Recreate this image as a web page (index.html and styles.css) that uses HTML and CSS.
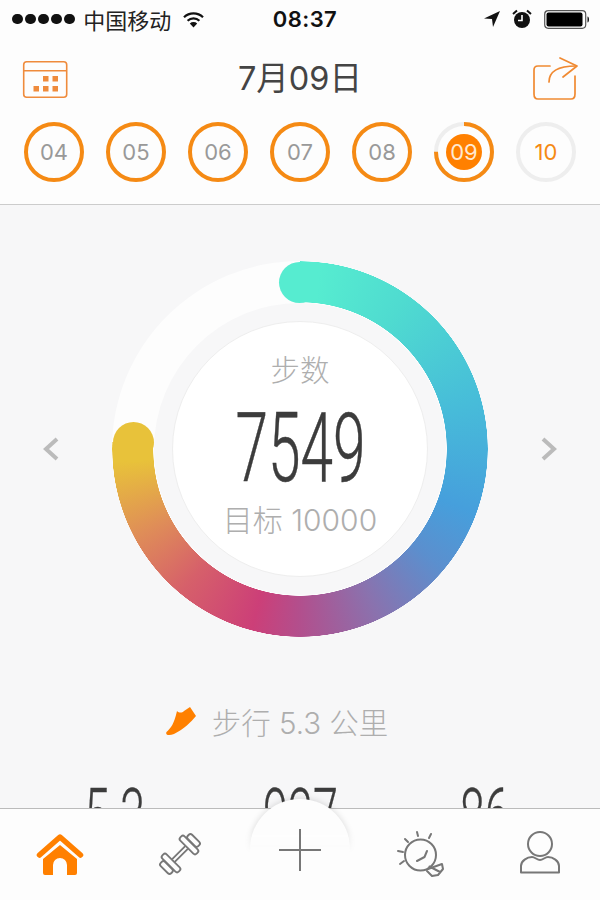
FILE: index.html
```html
<!DOCTYPE html>
<html lang="zh">
<head>
<meta charset="utf-8">
<title>步数</title>
<link rel="stylesheet" href="styles.css">
</head>
<body>
<div class="app">
  <header class="top">
    <div class="status">
      <div class="status-left">
        <div class="dots"><i></i><i></i><i></i><i></i><i></i></div>
        <span class="carrier">中国移动</span>
        <svg class="wifi" width="23" height="17" viewBox="0 0 23 17"><path d="M11.5 16.5 L7.8 12.4 A5.4 5.4 0 0 1 15.2 12.4 Z" fill="#111"/><path d="M5.6 9.8 A8.6 8.6 0 0 1 17.4 9.8" fill="none" stroke="#111" stroke-width="2.2"/><path d="M2 6.2 A13.6 13.6 0 0 1 21 6.2" fill="none" stroke="#111" stroke-width="2.2"/></svg>
      </div>
      <span class="time">08:37</span>
      <div class="status-right">
        <svg width="16" height="16" viewBox="0 0 16 16"><path d="M0 7.5 L16 0 L9 16 L8 8 Z" fill="#111"/></svg>
        <svg width="20" height="20" viewBox="0 0 20 20"><circle cx="10" cy="11" r="8" fill="#111"/><path d="M10 6 V11.5 H6" fill="none" stroke="#fff" stroke-width="1.6"/><path d="M1 5 L5 1.5 M19 5 L15 1.5" stroke="#111" stroke-width="2"/></svg>
        <svg width="46" height="19" viewBox="0 0 46 19"><rect x=".7" y=".7" width="41" height="17.6" rx="3.5" fill="none" stroke="#555" stroke-width="1.2"/><rect x="2.5" y="2.5" width="36" height="14" rx="2" fill="#000"/><path d="M43.5 6.5 C45.5 6.5 45.5 12.5 43.5 12.5 Z" fill="#111"/></svg>
      </div>
    </div>
    <div class="nav">
      <svg width="46" height="39" viewBox="0 0 46 39"><rect x="1.7" y="1.7" width="43" height="35.6" rx="3" fill="none" stroke="#ef8b3c" stroke-width="1.6"/><path d="M2 10.8 H44" stroke="#ef8b3c" stroke-width="1.6"/><g fill="#ef8b3c"><rect x="21" y="16" width="5.5" height="5.5"/><rect x="30.500" y="16" width="5.500" height="5.500"/><rect x="11.500" y="26" width="5.500" height="5.500"/><rect x="21" y="26" width="5.500" height="5.500"/><rect x="30.500" y="26" width="5.500" height="5.500"/></g></svg>
      <h1 class="date">7月09日</h1>
      <svg width="46" height="46" viewBox="0 0 46 46"><g fill="none" stroke="#f08a32" stroke-width="1.7" stroke-linecap="round" stroke-linejoin="round"><path d="M18 10 H6 Q2 10 2 14 V38 Q2 43 6 43 H39 Q43 43 43 38 V20"/><path d="M17 26 C17 16 26 10 44 10"/><path d="M28 2 L45 10 L31 21"/></g></svg>
    </div>
    <div class="days">
      <div class="day done">04</div>
      <div class="day done">05</div>
      <div class="day done">06</div>
      <div class="day done">07</div>
      <div class="day done">08</div>
      <div class="day today">
        <svg class="today-arc" width="60" height="60" viewBox="0 0 60 60"><circle cx="30" cy="30" r="28" fill="none" stroke="#eeeeee" stroke-width="4"/><circle cx="30" cy="30" r="28" fill="none" stroke="#f58a14" stroke-width="4" stroke-dasharray="132 176" transform="rotate(-90 30 30)"/></svg>
        <span class="today-disc">09</span>
      </div>
      <div class="day future">10</div>
    </div>
  </header>

  <main class="main">
    <section class="ring-row">
      <svg width="18" height="26" viewBox="0 0 18 26"><path d="M15 3 L4 13 L15 23" fill="none" stroke="#bbbbbb" stroke-width="4"/></svg>
      <div class="track">
        <div class="gradient"></div>
        <i class="cap cap-start"></i>
        <i class="cap cap-end"></i>
        <div class="hub">
          <div class="disc">
            <span class="label">步数</span>
            <span class="steps">7549</span>
            <span class="goal">目标 10000</span>
          </div>
        </div>
      </div>
      <svg width="18" height="26" viewBox="0 0 18 26"><path d="M3 3 L14 13 L3 23" fill="none" stroke="#bbbbbb" stroke-width="4"/></svg>
    </section>
    <div class="walk">
      <svg width="30" height="30" viewBox="0 0 30 30"><path d="M0.500 26 C5 22 8 18 11 5 C13 7 16 7 18 5 L24 1 L30 10 C25 16 18 23 8 28 C3 30 -1 29 0.500 26 Z" fill="#ff8000"/></svg>
      <span>步行 5.3 公里</span>
    </div>
    <div class="stats">
      <span class="stat">5.3</span>
      <span class="stat">927</span>
      <span class="stat">86</span>
    </div>
  </main>

  <nav class="tabs">
    <div class="dome"><i></i></div>
    <div class="tab">
      <svg width="48" height="44" viewBox="0 0 48 44"><path d="M3.500 23 L24 5 L44.500 23" fill="none" stroke="#ff8000" stroke-width="5.500" stroke-linecap="round" stroke-linejoin="round"/><path d="M24 13 L41 27 V41 Q41 43 39 43 H31 V33 A7 7 0 0 0 17 33 V43 H9 Q7 43 7 41 V27 Z" fill="#ff8000"/></svg>
    </div>
    <div class="tab">
      <svg width="48" height="48" viewBox="-26 -26 52 52"><g transform="rotate(-45)" fill="none" stroke="#777" stroke-width="2"><path d="M-10 -2 H10 M-10 2 H10"/><rect x="-17" y="-12.500" width="6.500" height="25" rx="2.500"/><rect x="-24" y="-8" width="6.500" height="16" rx="2.500"/><rect x="10.500" y="-12.500" width="6.500" height="25" rx="2.500"/><rect x="17.500" y="-8" width="6.500" height="16" rx="2.500"/></g></svg>
    </div>
    <div class="tab plus">
      <svg width="42" height="42" viewBox="0 0 42 42"><path d="M0 21 H42 M21 0 V42" stroke="#777" stroke-width="2"/></svg>
    </div>
    <div class="tab">
      <svg width="48" height="48" viewBox="396 831 48 48"><g fill="none" stroke="#777" stroke-width="2" stroke-linecap="round" stroke-linejoin="round"><circle cx="420.500" cy="856" r="15.500"/><path d="M427 852 L424.500 858 L417 862"/><path d="M417 833 L418 837 M431 835 L429 839 M405 840 L408 843 M398 852 L403 853 M400 865 L404 862"/><path d="M428 870 L442 865 L443 870 L438 876 L432 877 L427 872 M429.500 867.500 L440 873"/></g></svg>
    </div>
    <div class="tab">
      <svg width="42" height="48" viewBox="519 832 42 48"><g fill="none" stroke="#777" stroke-width="2" stroke-linejoin="round"><circle cx="540" cy="846" r="12"/><path d="M521 874.500 H559 V868 C559 863 553 859 548 859 C545 859 543 862 540 862 C537 862 535 859 532 859 C527 859 521 863 521 868 Z"/></g></svg>
    </div>
  </nav>
</div>
</body>
</html>
```
FILE: styles.css
```css
* { box-sizing: border-box; }
html, body { margin: 0; padding: 0; }
body {
  width: 600px;
  height: 900px;
  overflow: hidden;
  font-family: Inter, "Noto Sans CJK SC", sans-serif;
}
.app { display: flex; flex-direction: column; width: 600px; height: 900px; background: #f7f7f8; }

.top { height: 205px; background: #fdfdfd; border-bottom: 1px solid #cccccc; flex: none; }
.status { display: flex; align-items: center; justify-content: space-between; height: 40px; padding: 0 10px 2px 12px; position: relative; }
.status-left { display: flex; align-items: center; width: 210px; }
.dots { display: flex; gap: 2.3px; margin-right: 8px; }
.dots i { width: 10.800px; height: 10.800px; border-radius: 50%; background: #111; }
.carrier { font-size: 22px; font-weight: 400; color: #222; width: 88px; white-space: nowrap; }
.wifi { margin-left: 11px; }
.time { font-size: 22px; font-weight: 600; color: #111; letter-spacing: .4px; margin-left: 8px; }
.status-right { display: flex; align-items: center; justify-content: flex-end; gap: 12px; width: 210px; }

.nav { display: flex; align-items: center; justify-content: space-between; height: 78px; padding: 0 22px; }
.date { margin: 0; font-size: 32.500px; font-weight: 400; color: #444444; line-height: 40px; }

.days { display: flex; gap: 22px; padding: 4px 24px 0; }
.day {
  position: relative;
  display: flex; align-items: center; justify-content: center;
  width: 60px; height: 60px;
  border-radius: 50%;
  font-size: 22px; font-weight: 400;
}
.done { border: 4px solid #f58a14; color: #999999; }
.future { border: 4px solid #eeeeee; color: #f58a14; }
.today-arc { position: absolute; left: 0; top: 0; }
.today-disc {
  display: flex; align-items: center; justify-content: center;
  width: 36px; height: 36px;
  border-radius: 50%;
  background: #ff8000; color: #ffe9d2;
  position: relative;
}

.main { flex: 1; min-height: 0; overflow: hidden; padding-top: 56px; }
.ring-row { display: flex; align-items: center; justify-content: space-between; padding: 0 42px; }
.track {
  position: relative;
  display: flex; align-items: center; justify-content: center;
  width: 376px; height: 376px;
  border-radius: 50%;
  background: #fdfdfd;
}
.gradient {
  position: absolute; inset: 0;
  border-radius: 50%;
  background: conic-gradient(from 0deg,
    #56ecd0 0deg, #56ecd0 6deg, #4fdbd0 35deg, #47bcd9 75deg, #469fdc 110deg, #5b8fce 130deg,
    #8a72ae 155deg, #b24f8d 180deg, #cc3f78 195deg, #d6606a 220deg, #df8d58 242deg, #e8c23a 266deg, #e8c23a 272deg,
    transparent 272deg);
  -webkit-mask: radial-gradient(closest-side, transparent 146.5px, #000 147px, #000 187.5px, transparent 188px);
  mask: radial-gradient(closest-side, transparent 146.5px, #000 147px, #000 187.5px, transparent 188px);
}
.cap { position: absolute; width: 41px; height: 41px; border-radius: 50%; }
.cap-start { left: 167px; top: 0.500px; background: #56ecd0; }
.cap-end { left: 0.500px; top: 161px; background: #e8c23a; }
.hub {
  position: relative;
  display: flex; align-items: center; justify-content: center;
  width: 292px; height: 292px;
  border-radius: 50%;
  background: #f7f7f8;
}
.disc {
  display: flex; flex-direction: column; align-items: center;
  width: 256px; height: 256px;
  border-radius: 50%;
  border: 1px solid #eeeeee;
  background: #ffffff;
  padding-top: 27px;
}
.label { font-size: 29.500px; font-weight: 300; line-height: 42px; color: #aeaeae; }
.steps {
  display: block;
  font-family: Roboto, sans-serif;
  font-size: 96px; font-weight: 300; line-height: 96px;
  color: #3c3c3c;
  -webkit-text-stroke: .5px #3c3c3c;
  transform: scaleX(.61);
  margin-top: 8.500px;
}
.goal { font-size: 30px; font-weight: 300; line-height: 42px; color: #aeaeae; margin-top: 3.500px; white-space: nowrap; }

.walk { display: flex; align-items: center; justify-content: center; gap: 16px; height: 40px; margin-top: 64px; padding-right: 46px; font-size: 29.500px; font-weight: 300; color: #aeaeae; white-space: nowrap; }

.stats { display: grid; grid-template-columns: repeat(3, 185px); justify-content: center; margin-top: 42px; }
.stat {
  justify-self: center;
  font-family: Roboto, sans-serif;
  font-size: 75px; font-weight: 300; line-height: 64px;
  color: #3c3c3c;
  -webkit-text-stroke: .4px #3c3c3c;
  transform: scaleX(.6);
}

.tabs {
  position: relative;
  flex: none;
  display: grid; grid-template-columns: repeat(5, 120px); align-items: center; justify-items: center;
  height: 92px;
  padding-bottom: 1px;
  background: #fdfdfd;
  border-top: 1px solid #bbbbbb;
}
.tab { display: flex; align-items: center; justify-content: center; position: relative; }
.plus { margin-bottom: 9px; }
.dome {
  position: absolute; left: 240px; top: -16px;
  width: 120px; height: 60px;
  overflow: hidden;
  -webkit-mask: linear-gradient(#000 60%, transparent);
  mask: linear-gradient(#000 60%, transparent);
}
.dome i {
  display: block;
  position: absolute; left: 10px; top: 6px;
  width: 100px; height: 100px;
  border-radius: 50%;
  background: #fdfdfd;
  box-shadow: 0 -1px 6px rgba(0,0,0,.13);
}
```
